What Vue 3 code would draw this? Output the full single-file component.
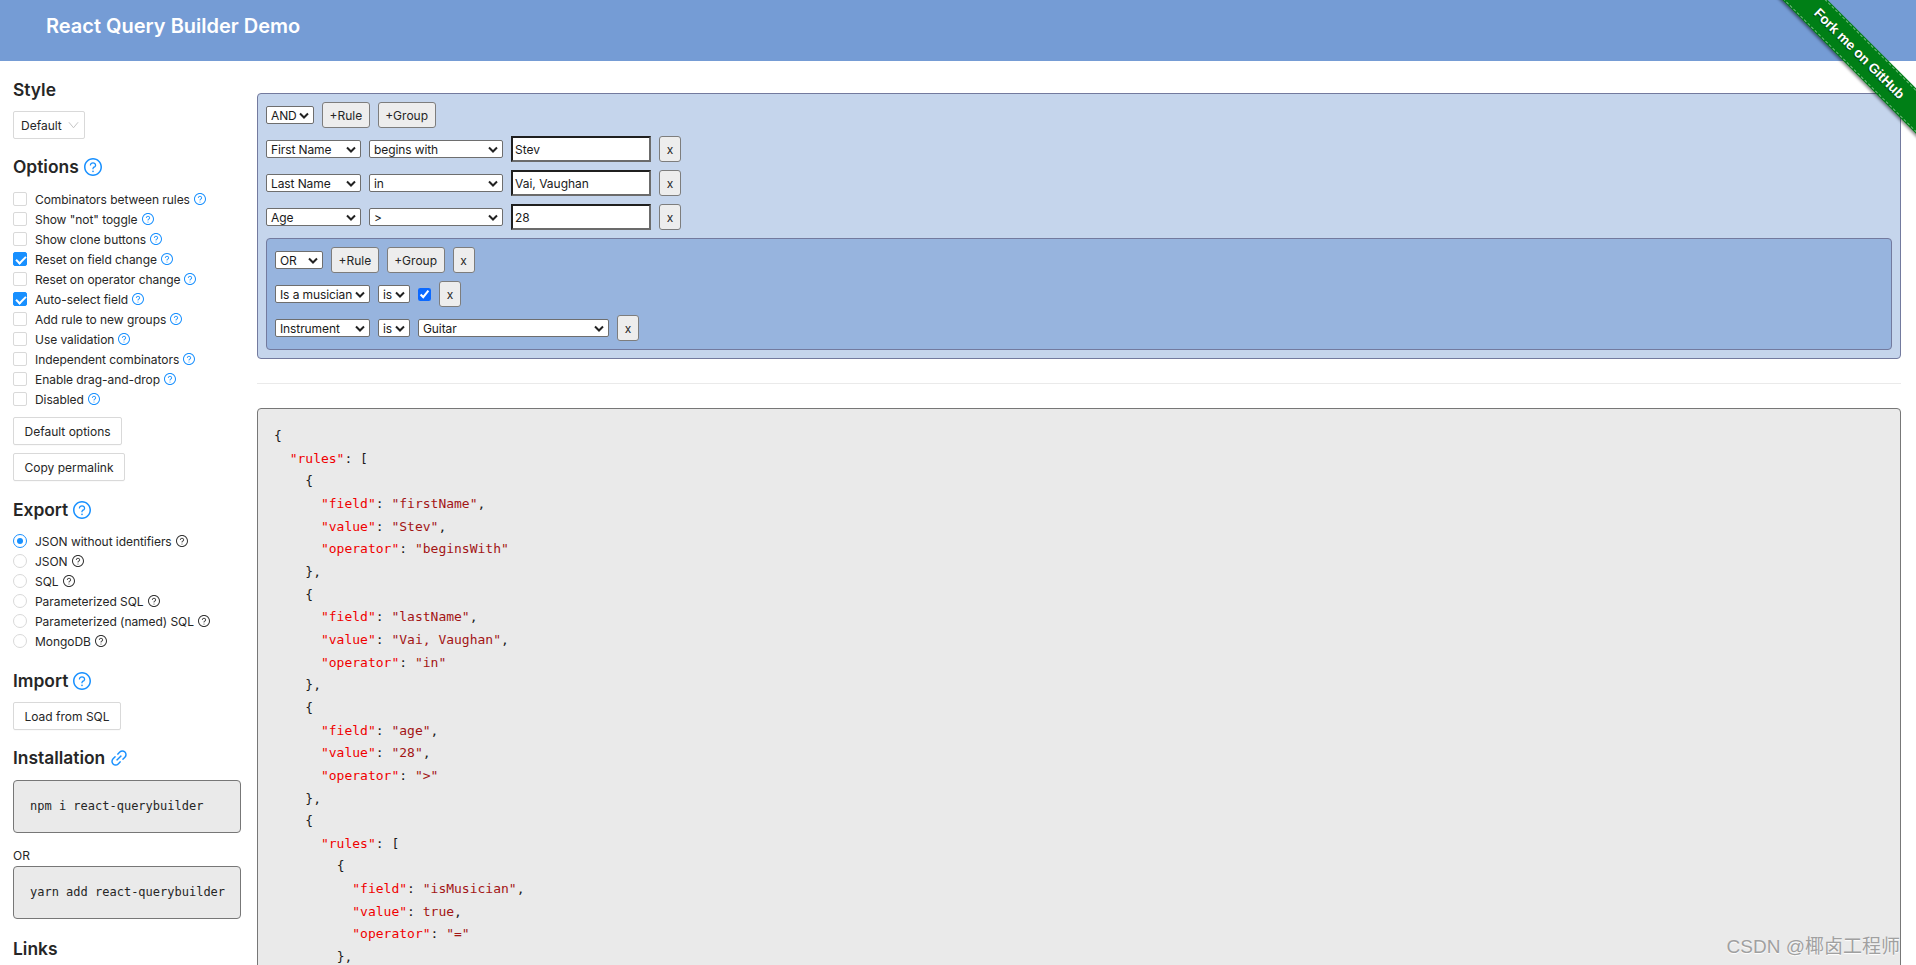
<script setup>
import { computed } from 'vue'

const optionItems = [
  { label: 'Combinators between rules', on: false },
  { label: 'Show "not" toggle', on: false },
  { label: 'Show clone buttons', on: false },
  { label: 'Reset on field change', on: true },
  { label: 'Reset on operator change', on: false },
  { label: 'Auto-select field', on: true },
  { label: 'Add rule to new groups', on: false },
  { label: 'Use validation', on: false },
  { label: 'Independent combinators', on: false },
  { label: 'Enable drag-and-drop', on: false },
  { label: 'Disabled', on: false }
]
const exportItems = ['JSON without identifiers', 'JSON', 'SQL', 'Parameterized SQL', 'Parameterized (named) SQL', 'MongoDB']

const query = {
  rules: [
    { field: 'firstName', value: 'Stev', operator: 'beginsWith' },
    { field: 'lastName', value: 'Vai, Vaughan', operator: 'in' },
    { field: 'age', value: '28', operator: '>' },
    {
      rules: [
        { field: 'isMusician', value: true, operator: '=' },
        { field: 'instrument', value: 'Guitar', operator: '=' }
      ],
      combinator: 'or',
      not: false
    }
  ],
  combinator: 'and',
  not: false
}

const lines = computed(() =>
  JSON.stringify(query, null, 2).split('\n').slice(0, 24).map((line) => {
    const indent = line.match(/^\s*/)[0]
    const m = line.match(/^\s*("[^"]+")(: )(.*)$/)
    if (!m) return { indent, plain: line.trim() }
    const raw = m[3]
    const trail = raw.endsWith(',') ? ',' : ''
    const val = trail ? raw.slice(0, -1) : raw
    const isLit = /^["tf\d]/.test(val)
    return {
      indent,
      key: m[1],
      colon: m[2],
      val: isLit ? val : '',
      rest: isLit ? trail : raw
    }
  })
)

const qPaths = [
  'M512 64C264.6 64 64 264.6 64 512s200.6 448 448 448 448-200.6 448-448S759.4 64 512 64zm0 820c-205.4 0-372-166.6-372-372s166.6-372 372-372 372 166.6 372 372-166.6 372-372 372z',
  'M623.6 316.7C593.6 290.4 554 276 512 276s-81.6 14.5-111.6 40.7C369.2 344 352 380.7 352 420v7.6c0 4.4 3.6 8 8 8h48c4.4 0 8-3.6 8-8V420c0-44.1 43.1-80 96-80s96 35.9 96 80c0 31.1-22 59.6-56.1 72.7-21.2 8.1-39.2 22.3-52.1 40.9-13.1 19-19.9 41.8-19.9 64.9V620c0 4.4 3.6 8 8 8h48c4.4 0 8-3.6 8-8v-22.7a48.3 48.3 0 0 1 30.9-44.8c59-22.7 97.1-74.7 97.1-132.5.1-39.3-17.1-76-48.3-103.3z',
  'M472 732a40 40 0 1 0 80 0 40 40 0 1 0-80 0z'
]
const linkPath = 'M574 665.4a8.03 8.03 0 0 0-11.3 0L446.5 781.6c-53.8 53.8-144.6 59.5-204 0-59.5-59.5-53.8-150.2 0-204l116.2-116.2c3.1-3.1 3.1-8.2 0-11.3l-39.8-39.8a8.03 8.03 0 0 0-11.3 0L191.4 526.5c-84.6 84.6-84.6 221.5 0 306s221.5 84.6 306 0l116.2-116.2c3.1-3.1 3.1-8.2 0-11.3L574 665.4zm258.6-474c-84.6-84.6-221.5-84.6-306 0L410.3 307.6a8.03 8.03 0 0 0 0 11.3l39.7 39.7c3.1 3.1 8.2 3.1 11.3 0l116.2-116.2c53.8-53.8 144.6-59.5 204 0 59.5 59.5 53.8 150.2 0 204L665.3 562.6a8.03 8.03 0 0 0 0 11.3l39.8 39.8c3.1 3.1 8.2 3.1 11.3 0l116.2-116.2c84.5-84.6 84.5-221.5 0-306.1zM610.1 372.3a8.03 8.03 0 0 0-11.3 0L372.3 598.7a8.03 8.03 0 0 0 0 11.3l39.6 39.6c3.1 3.1 8.2 3.1 11.3 0l226.4-226.4c3.1-3.1 3.1-8.2 0-11.3l-39.5-39.6z'
</script>

<template>
  <div class="app">
    <header class="top"><h1>React Query Builder Demo</h1></header>
    <a class="ribbon"><span>Fork me on GitHub</span></a>

    <div class="body">
      <aside class="side">
        <h2 class="head s-style">Style</h2>
        <div class="dd">Default
          <svg class="dd-arrow" viewBox="0 0 12 8"><path d="M1 1l5 6 5-6" fill="none" stroke="#bfbfbf" stroke-width="1"/></svg>
        </div>

        <h2 class="head s-options">Options
          <svg class="ic-lg" viewBox="64 64 896 896"><path v-for="p in qPaths" :key="p" :d="p"/></svg>
        </h2>
        <ul class="list s-list">
          <li v-for="o in optionItems" :key="o.label">
            <span class="cb" :class="{ on: o.on }"></span>
            <span>{{ o.label }}</span>
            <svg class="ic-sm" viewBox="64 64 896 896"><path v-for="p in qPaths" :key="p" :d="p"/></svg>
          </li>
        </ul>
        <button class="btn s-b1">Default options</button>
        <button class="btn s-b2">Copy permalink</button>

        <h2 class="head s-export">Export
          <svg class="ic-lg" viewBox="64 64 896 896"><path v-for="p in qPaths" :key="p" :d="p"/></svg>
        </h2>
        <ul class="list s-radios">
          <li v-for="(r, i) in exportItems" :key="r">
            <span class="rd" :class="{ on: i === 0 }"></span>
            <span>{{ r }}</span>
            <svg class="ic-sm dark" viewBox="64 64 896 896"><path v-for="p in qPaths" :key="p" :d="p"/></svg>
          </li>
        </ul>

        <h2 class="head s-import">Import
          <svg class="ic-lg" viewBox="64 64 896 896"><path v-for="p in qPaths" :key="p" :d="p"/></svg>
        </h2>
        <button class="btn s-b3">Load from SQL</button>

        <h2 class="head s-install">Installation
          <svg class="ic-lg" viewBox="64 64 896 896"><path :d="linkPath"/></svg>
        </h2>
        <pre class="code s-pre1">npm i react-querybuilder</pre>
        <div class="or">OR</div>
        <pre class="code">yarn add react-querybuilder</pre>
        <h2 class="head s-links">Links</h2>
      </aside>

      <main class="main">
        <section class="group">
          <div class="row">
            <select class="w48"><option>AND</option></select>
            <button class="qbtn">+Rule</button>
            <button class="qbtn">+Group</button>
          </div>
          <div class="row">
            <select class="w95"><option>First Name</option></select>
            <select class="w134"><option>begins with</option></select>
            <input class="val" value="Stev" />
            <button class="qbtn x">x</button>
          </div>
          <div class="row">
            <select class="w95"><option>Last Name</option></select>
            <select class="w134"><option>in</option></select>
            <input class="val" value="Vai, Vaughan" />
            <button class="qbtn x">x</button>
          </div>
          <div class="row">
            <select class="w95"><option>Age</option></select>
            <select class="w134"><option>&gt;</option></select>
            <input class="val" value="28" />
            <button class="qbtn x">x</button>
          </div>
          <section class="group inner">
            <div class="row">
              <select class="w48"><option>OR</option></select>
              <button class="qbtn">+Rule</button>
              <button class="qbtn">+Group</button>
              <button class="qbtn x">x</button>
            </div>
            <div class="row">
              <select class="w95"><option>Is a musician</option></select>
              <select class="w32"><option>is</option></select>
              <input class="chk" type="checkbox" checked />
              <button class="qbtn x">x</button>
            </div>
            <div class="row">
              <select class="w95"><option>Instrument</option></select>
              <select class="w32"><option>is</option></select>
              <select class="w191"><option>Guitar</option></select>
              <button class="qbtn x">x</button>
            </div>
          </section>
        </section>

        <hr class="rule" />

        <pre class="json"><div v-for="(l, i) in lines" :key="i" class="ln">{{ l.indent }}<template v-if="l.key"><span class="k">{{ l.key }}</span>{{ l.colon }}<span v-if="l.val" class="v">{{ l.val }}</span>{{ l.rest }}</template><template v-else>{{ l.plain }}</template></div></pre>
      </main>
    </div>

    <div class="mark">CSDN @椰卤工程师</div>
  </div>
</template>

<style>
html, body { margin: 0; height: 965px; overflow: hidden; background: #fff; }
</style>

<style scoped>
.app {
  position: relative;
  height: 965px;
  overflow: hidden;
  font-family: Inter, "Noto Sans", sans-serif;
  font-size: 12px;
  color: #262626;
}
.top {
  height: 61px;
  background: #759cd5;
  padding-left: 46px;
  display: flex;
  align-items: center;
  box-sizing: border-box;
}
.top h1 {
  margin: 0 0 9px;
  font-size: 20px;
  font-weight: 600;
  color: #fff;
  line-height: 24px;
}
.ribbon {
  position: absolute;
  left: 1710px;
  top: 39px;
  width: 300px;
  height: 32px;
  box-sizing: border-box;
  padding: 1px 0;
  transform: rotate(45deg);
  background: #007f16;
  box-shadow: 0 2px 3px rgba(0, 0, 0, 0.45);
  display: flex;
}
.ribbon span {
  flex: 1;
  border-top: 1px dashed rgba(255, 255, 255, 0.45);
  border-bottom: 1px dashed rgba(255, 255, 255, 0.45);
  padding-right: 3px;
  text-align: center;
  color: #fff;
  font: bold 13.5px/28px "Liberation Sans", sans-serif;
  text-shadow: 0 1px 1px rgba(0, 0, 0, 0.6);
}
.body { display: flex; align-items: flex-start; }
.side {
  width: 228px;
  margin-left: 13px;
  margin-right: 16px;
  flex: none;
}
.head {
  margin: 0;
  font-size: 17.4px;
  font-weight: 600;
  line-height: 24px;
  display: flex;
  align-items: center;
  gap: 5px;
  color: #262626;
}
.ic-lg { width: 18px; height: 18px; fill: #1890ff; }
.ic-sm { width: 12px; height: 12px; fill: #1890ff; margin-left: 4px; }
.ic-sm.dark { fill: #333; }
.s-style { margin-top: 17px; }
.dd {
  margin-top: 9px;
  width: 72px;
  height: 28px;
  box-sizing: border-box;
  border: 1px solid #d9d9d9;
  border-radius: 2px;
  padding-left: 7px;
  display: flex;
  align-items: center;
  gap: 6px;
  font-size: 12px;
}
.dd-arrow { width: 11px; height: 8px; }
.s-options { margin-top: 16px; }
.list { list-style: none; margin: 0; padding: 0; letter-spacing: -0.05px; }
.list li { height: 20px; display: flex; align-items: center; }
.s-list { margin-top: 10px; }
.cb {
  width: 14px;
  height: 14px;
  box-sizing: border-box;
  border: 1px solid #d9d9d9;
  border-radius: 2px;
  margin-right: 8px;
  position: relative;
  flex: none;
}
.cb.on { background: #1890ff; border-color: #1890ff; }
.cb.on::after {
  content: "";
  position: absolute;
  left: 3.5px;
  top: 1px;
  width: 4px;
  height: 8px;
  border: solid #fff;
  border-width: 0 2px 2px 0;
  transform: rotate(45deg);
}
.rd {
  width: 14px;
  height: 14px;
  box-sizing: border-box;
  border: 1px solid #d9d9d9;
  border-radius: 50%;
  margin-right: 8px;
  position: relative;
  flex: none;
}
.rd.on { border-color: #1890ff; }
.rd.on::after {
  content: "";
  position: absolute;
  left: 3px;
  top: 3px;
  width: 6px;
  height: 6px;
  border-radius: 50%;
  background: #1890ff;
}
.btn {
  display: block;
  height: 28px;
  box-sizing: border-box;
  padding: 0 10.5px;
  background: #fff;
  border: 1px solid #d9d9d9;
  border-radius: 2px;
  font: 12px Inter, sans-serif;
  color: #262626;
  box-shadow: 0 1px 0 rgba(0, 0, 0, 0.02);
}
.s-b1 { margin-top: 8px; }
.s-b2 { margin-top: 8px; }
.s-export { margin-top: 17px; }
.s-radios { margin-top: 9px; }
.s-import { margin-top: 18px; }
.s-b3 { margin-top: 9px; }
.s-install { margin-top: 16px; }
.code {
  margin: 0;
  height: 53px;
  box-sizing: border-box;
  padding: 0 16px;
  border: 1px solid #777;
  border-radius: 4px;
  background: #eaeaea;
  font: 12px/51px "DejaVu Sans Mono", monospace;
  color: #262626;
}
.s-pre1 { margin-top: 10px; }
.or { margin-top: 13px; height: 20px; line-height: 20px; }
.s-links { margin-top: 18px; }

.main { flex: 1; margin: 32px 15px 0 0; min-width: 0; }
.group {
  border: 1px solid #737a9e;
  border-radius: 4px;
  background: #c5d5ec;
  padding: 8px;
  display: flex;
  flex-direction: column;
  gap: 8px;
}
.group.inner { background: #97b4de; }
.row { display: flex; align-items: center; gap: 8px; height: 26px; }
.row select {
  appearance: none;
  height: 18px;
  box-sizing: border-box;
  border: 1px solid #6e6e6e;
  border-radius: 2px;
  padding: 0 0 0 4px;
  font: 12px Inter, sans-serif;
  letter-spacing: -0.1px;
  color: #1a1a1a;
  background: #fff url("data:image/svg+xml,%3Csvg xmlns='http://www.w3.org/2000/svg' width='10' height='7'%3E%3Cpath d='M1 1.5l4 4 4-4' fill='none' stroke='%23222' stroke-width='2'/%3E%3C/svg%3E") no-repeat right 4px center;
}
.w48 { width: 48px; }
.w95 { width: 95px; }
.w134 { width: 134px; }
.w32 { width: 32px; }
.w191 { width: 191px; }
.qbtn {
  height: 26px;
  box-sizing: border-box;
  padding: 0 6.5px;
  background: #ededed;
  border: 1px solid #7d7d7d;
  border-radius: 3px;
  font: 12px Inter, sans-serif;
  color: #262626;
}
.qbtn.x { width: 22px; padding: 0; }
.val {
  width: 140px;
  height: 26px;
  box-sizing: border-box;
  padding: 0 2px;
  background: #fff;
  border: 2px solid;
  border-color: #1f1f1f #6b6b6b #6b6b6b #1f1f1f;
  font: 12px Inter, sans-serif;
  color: #1a1a1a;
  outline: none;
}
.chk {
  width: 13px;
  height: 13px;
  margin: 0;
  accent-color: #0b69ff;
}
.rule {
  height: 1px;
  border: 0;
  background: #eaeaea;
  margin: 24px 0 24px;
}
.json {
  margin: 0;
  height: 700px;
  box-sizing: border-box;
  border: 1px solid #777;
  border-radius: 4px;
  background: #eaeaea;
  padding: 16px 16px;
  font: 13px/22.67px "DejaVu Sans Mono", monospace;
  color: #1a1a1a;
}
.ln { height: 22.67px; white-space: pre; }
.k { color: #f00000; }
.v { color: #a31515; }
.mark {
  position: absolute;
  right: 16px;
  top: 936px;
  font: 19px/22px "Liberation Sans", "Noto Sans CJK SC", sans-serif;
  color: #a0a0a0;
  text-shadow: 0 1px 1px #fff;
}
</style>
